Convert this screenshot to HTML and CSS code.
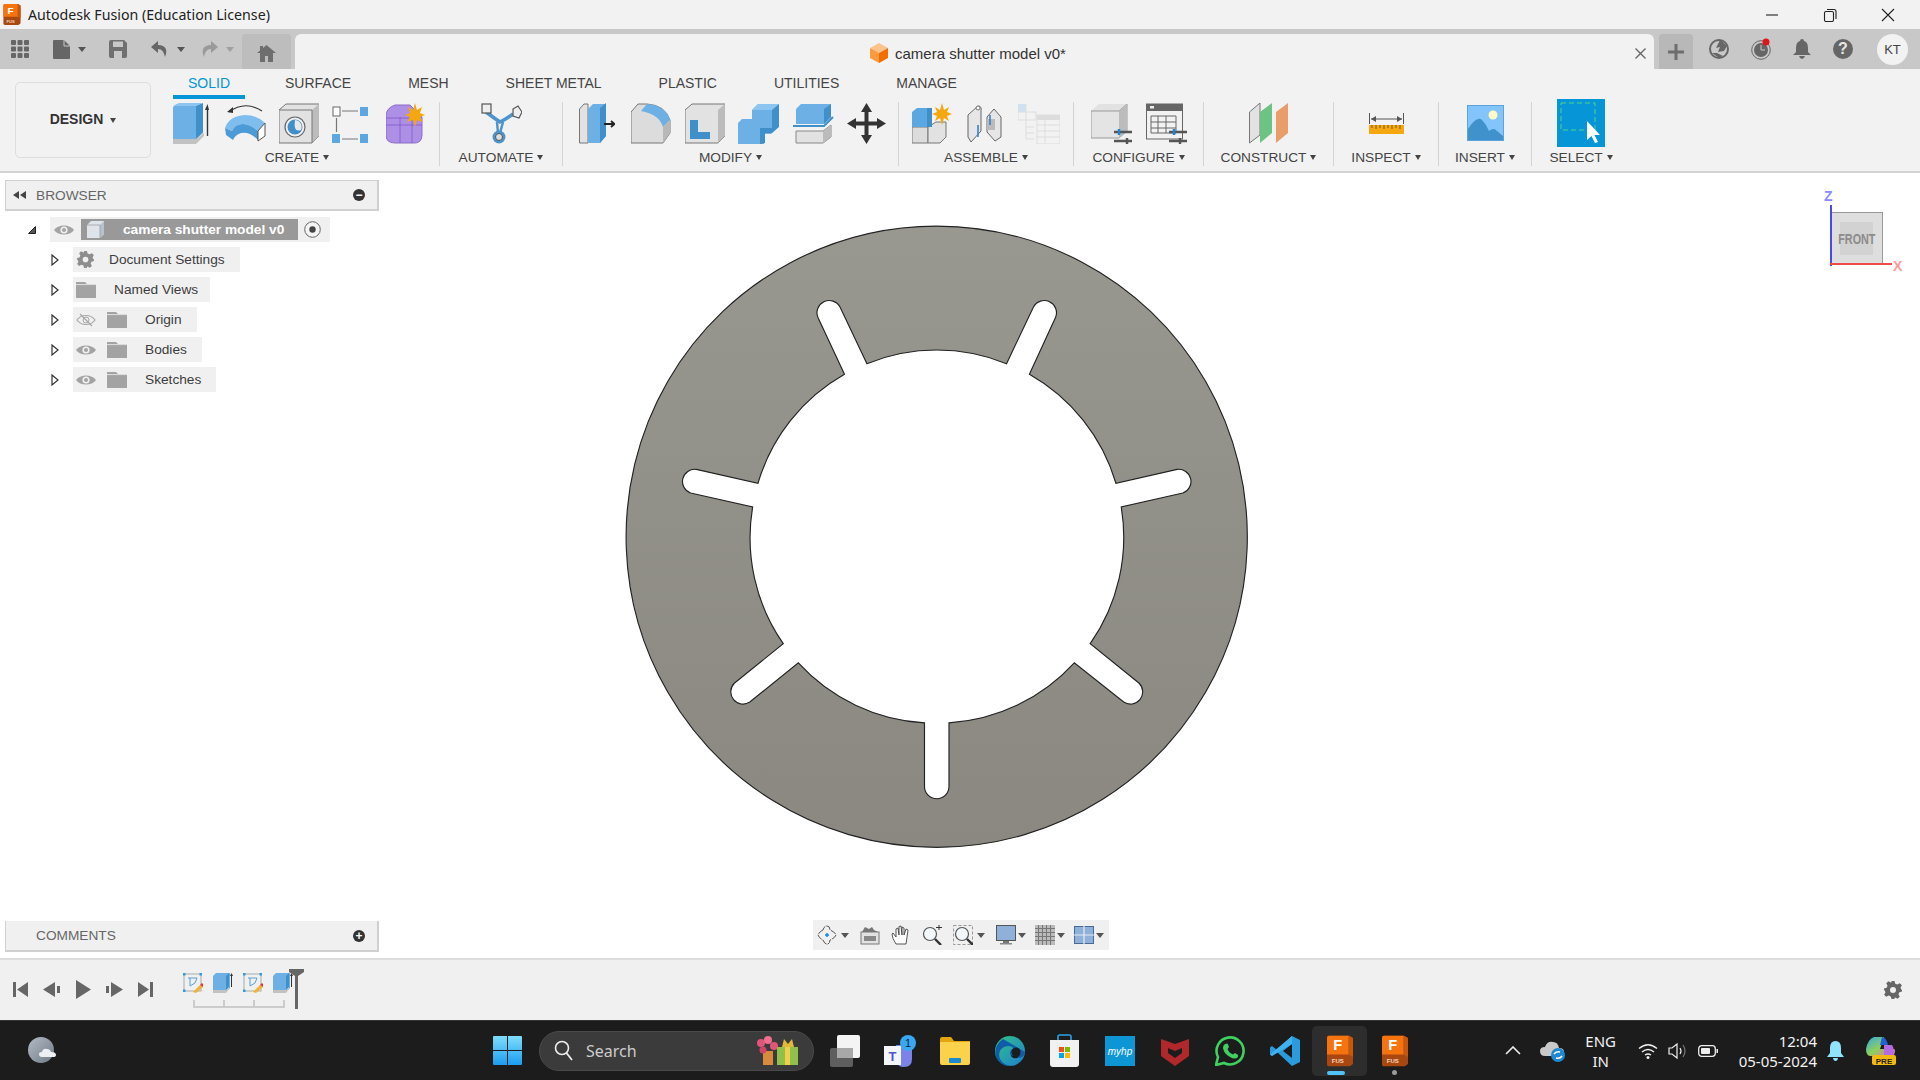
FILE: index.html
```html
<!DOCTYPE html>
<html lang="en">
<head>
  <meta charset="UTF-8">
  <title>Autodesk Fusion (Education License)</title>
  <link rel="stylesheet" href="styles.css">
</head>
<body>
  <!-- shared icons -->
  <svg class="defs" width="0" height="0">
    <symbol id="eye" viewBox="0 0 20 12">
      <path d="M0 6C4 0 16 0 20 6C16 12 4 12 0 6Z" fill="#a3a3a3"/>
      <circle cx="10" cy="6" r="3.6" fill="#f0f0f0"/>
      <circle cx="10" cy="6" r="2" fill="#a3a3a3"/>
    </symbol>
    <symbol id="eye-off" viewBox="0 0 20 14">
      <path d="M1 7C5 1 15 1 19 7C15 13 5 13 1 7Z" fill="none" stroke="#a8a8a8" stroke-width="1.2"/>
      <circle cx="10" cy="7" r="3" fill="none" stroke="#a8a8a8"/>
      <path d="M4 1L16 13" stroke="#a8a8a8" stroke-width="1.2"/>
    </symbol>
    <symbol id="folder" viewBox="0 0 20 16">
      <path d="M0 0H9L11 2H20V16H0Z" fill="#a3a3a3"/>
      <path d="M0 2.6H20" stroke="#f0f0f0" stroke-width=".8"/>
    </symbol>
    <symbol id="arrow" viewBox="0 0 8 12">
      <path d="M1 1L7 6L1 11Z" fill="#fff" stroke="#333" stroke-width="1.2"/>
    </symbol>
    <symbol id="tl-sketch" viewBox="0 0 20 20">
      <rect x="1" y="1" width="17" height="17" fill="none" stroke="#aaa"/>
      <rect x="0" y="0" width="2.5" height="2.5" fill="#2f9ae0"/>
      <rect x="16.5" y="0" width="2.5" height="2.5" fill="#2f9ae0"/>
      <rect x="0" y="16.5" width="2.5" height="2.5" fill="#2f9ae0"/>
      <path d="M5 5H14L12 10L7 13V5" fill="none" stroke="#5a9fd4"/>
      <path d="M10 19L17 12L20 14L13 20Z" fill="#f2b233"/>
      <path d="M17 12L19 10L21 12L20 14Z" fill="#e33"/>
    </symbol>
    <symbol id="tl-extrude" viewBox="0 0 20 20">
      <path d="M0 3L3 0H17V15L15 17H0Z" fill="#6cb0e6"/>
      <path d="M13 3L16 0V14L13 17Z" fill="#3f8fcb"/>
      <path d="M0 17H13L16 14V16L13 20H0Z" fill="#c2c2c2"/>
      <path d="M18.500 2V14" stroke="#333"/>
      <path d="M17 3L18.500 0L20 3Z" fill="#333"/>
    </symbol>
    <symbol id="fusion" viewBox="0 0 30 36">
      <path d="M3 0H25L30 3V33L26 36H3Q0 36 0 33V3Q0 0 3 0Z" fill="#a8470f"/>
      <path d="M3 0H25V22H0V3Q0 0 3 0Z" fill="#f57410"/>
      <path d="M25 0L30 3V25L25 22Z" fill="#c9560b"/>
    </symbol>
  </svg>

  <header class="titlebar">
    <svg class="app-logo" width="18" height="21" viewBox="0 0 30 36">
      <use href="#fusion"/>
      <text x="12.500" y="17" class="logo-f">F</text>
      <text x="12.500" y="32" class="logo-fus">FUS</text>
    </svg>
    <span class="app-title">Autodesk Fusion (Education License)</span>
    <div class="window-controls">
      <svg width="14" height="14" viewBox="0 0 14 14"><path d="M1 7H13" stroke="#222" stroke-width="1.100"/></svg>
      <svg width="14" height="14" viewBox="0 0 14 14"><rect x="1.500" y="3.500" width="9" height="10" rx="1.500" fill="none" stroke="#222" stroke-width="1.100"/><path d="M4 1.500H11Q13 1.500 13 3.500V11" fill="none" stroke="#222" stroke-width="1.100"/></svg>
      <svg width="14" height="14" viewBox="0 0 14 14"><path d="M1 1L13 13M13 1L1 13" stroke="#222" stroke-width="1.100"/></svg>
    </div>
  </header>

  <div class="toolbar">
    <div class="quick-tools">
      <svg class="qt-grid" width="18" height="18" viewBox="0 0 18 18" fill="#666"><rect width="5" height="5" rx="1"/><rect x="6.500" width="5" height="5" rx="1"/><rect x="13" width="5" height="5" rx="1"/><rect y="6.500" width="5" height="5" rx="1"/><rect x="6.500" y="6.500" width="5" height="5" rx="1"/><rect x="13" y="6.500" width="5" height="5" rx="1"/><rect y="13" width="5" height="5" rx="1"/><rect x="6.500" y="13" width="5" height="5" rx="1"/><rect x="13" y="13" width="5" height="5" rx="1"/></svg>
      <svg class="qt-file" width="17" height="19" viewBox="0 0 17 19"><path d="M1 0H11L17 6V18Q17 19 16 19H1Q0 19 0 18V1Q0 0 1 0Z" fill="#666"/><path d="M11 0V6H17" fill="none" stroke="#c8c8c8"/></svg>
      <span class="caret qt-caret"></span>
      <svg class="qt-save" width="18" height="18" viewBox="0 0 18 18"><path d="M2 0H15L18 3V16Q18 18 16 18H2Q0 18 0 16V2Q0 0 2 0Z" fill="#707070"/><rect x="4" y="1.500" width="10" height="5.500" fill="#c8c8c8"/><rect x="5" y="11" width="8" height="7" fill="#c8c8c8"/></svg>
      <svg class="qt-undo" width="18" height="18" viewBox="0 0 18 18"><path d="M7 1L0 7L7 13V9C11 9 13 12 14 17C17 10 15 5 7 5Z" fill="#666"/></svg>
      <span class="caret qt-caret"></span>
      <svg class="qt-redo" width="18" height="18" viewBox="0 0 18 18"><path d="M11 1L18 7L11 13V9C7 9 5 12 4 17C1 10 3 5 11 5Z" fill="#9a9a9a"/></svg>
      <span class="caret qt-caret muted"></span>
    </div>
    <div class="home-tab">
      <svg width="19" height="17" viewBox="0 0 19 17"><path d="M9.500 0L19 8H16V17H11V11H8V17H3V8H0L3 5.500V1H6V3Z" fill="#6e6e6e"/></svg>
    </div>
    <div class="doc-tab">
      <svg class="doc-cube" width="18" height="20" viewBox="0 0 18 20"><path d="M9 0L18 5L9 10L0 5Z" fill="#fdc38d"/><path d="M0 5L9 10V20L0 15Z" fill="#fb9a3e"/><path d="M18 5L9 10V20L18 15Z" fill="#f36d00"/></svg>
      <span class="doc-name">camera shutter model v0*</span>
      <svg class="doc-close" width="11" height="11" viewBox="0 0 11 11"><path d="M0.500 0.500L10.500 10.500M10.500 0.500L0.500 10.500" stroke="#666" stroke-width="1.400"/></svg>
    </div>
    <div class="new-tab">
      <svg width="16" height="16" viewBox="0 0 16 16"><path d="M8 0V16M0 8H16" stroke="#6e6e6e" stroke-width="3"/></svg>
    </div>
    <div class="account-tools">
      <svg width="20" height="20" viewBox="0 0 20 20"><circle cx="10" cy="10" r="9" fill="none" stroke="#666" stroke-width="2"/><path d="M11 1L7 9L11 8L9 13L15 12L18 7L13 2ZM3 14L10 19L14 17L8 14Z" fill="#666"/></svg>
      <svg width="20" height="22" viewBox="0 0 20 22"><circle cx="10" cy="12" r="9.300" fill="none" stroke="#666"/><circle cx="10" cy="12" r="7" fill="#666"/><path d="M10 7V12H14" stroke="#c8c8c8" fill="none"/><circle cx="15" cy="4" r="3.500" fill="#e0141c"/></svg>
      <svg width="18" height="20" viewBox="0 0 18 20"><path d="M9 0Q11 0 11 2Q15 3 15 9V13L18 16H0L3 13V9Q3 3 7 2Q7 0 9 0Z" fill="#666"/><path d="M6 17H12Q11 20 9 20Q7 20 6 17Z" fill="#666"/></svg>
      <span class="help-icon">?</span>
      <span class="avatar">KT</span>
    </div>
  </div>

  <section class="ribbon">
    <button class="design-btn">DESIGN<span class="caret small"></span></button>
    <div class="ribbon-main">
      <nav class="tabs">
        <span class="tab active">SOLID</span>
        <span class="tab">SURFACE</span>
        <span class="tab">MESH</span>
        <span class="tab">SHEET METAL</span>
        <span class="tab">PLASTIC</span>
        <span class="tab">UTILITIES</span>
        <span class="tab">MANAGE</span>
      </nav>
      <div class="panels">
        <div class="panel p-create">
          <div class="panel-icons icons-create">
            <svg width="36" height="41" viewBox="0 0 36 41"><path d="M0 4L4 1H30V30L23 36L0 36Z" fill="#6cb0e6"/><path d="M23 3L30 0V29L23 36Z" fill="#3f8fcb"/><path d="M0 3L6 0H30L23 3Z" fill="#8cc6f0"/><path d="M0 36H23L31 30V33L23 41H0Z" fill="#c2c2c2"/><path d="M34.500 6V33" stroke="#333" stroke-width="1.400"/><path d="M32 7L34.500 1L36 7Z" fill="#333"/></svg>
            <svg width="41" height="41" viewBox="0 0 41 41"><path d="M4 9Q20 -3 37 8" fill="none" stroke="#333" stroke-width="1.100"/><path d="M2 9L8 4V10Z" fill="#333"/><path d="M0 25Q4 13 20 12Q32 12 40 20L33 28Q25 21 17 21Q9 22 7 28Z" fill="#7fbdee"/><path d="M0 25L7 28Q9 22 17 21Q25 21 33 28V37Q24 28 16 30Q10 32 8 37L1 32Z" fill="#4d9bd6"/><path d="M33 28L40 20V33L33 38Z" fill="#fff" stroke="#555"/></svg>
            <svg width="40" height="41" viewBox="0 0 40 41"><path d="M0 7L7 1H40V33L33 40H0Z" fill="#e2e2e2" stroke="#777"/><path d="M33 7L40 1V33L33 40Z" fill="#bcbcbc"/><path d="M0.500 7H33V40" fill="none" stroke="#777"/><circle cx="16" cy="24" r="10" fill="#f0f0f0" stroke="#666" stroke-width="1.200"/><circle cx="16" cy="24" r="7.500" fill="#3f8fcb"/><path d="M16 17A7 7 0 0 1 22 27Q14 30 16 17Z" fill="#e8e8e8"/></svg>
            <svg width="36" height="41" viewBox="0 0 36 41"><rect x="1" y="4" width="7" height="9" fill="#fff" stroke="#666"/><rect x="28" y="4" width="8" height="9" fill="#5aa7e2"/><rect x="0" y="31" width="8" height="9" fill="#5aa7e2"/><rect x="28" y="31" width="8" height="9" fill="#5aa7e2"/><path d="M10 8H26M10 36H26M4.500 15V29" stroke="#777" stroke-width="1.200"/></svg>
            <svg width="39" height="41" viewBox="0 0 39 41"><path d="M0 13Q0 5 9 2H24L36 14V32Q36 41 26 40H9Q0 40 0 32Z" fill="#ae8fe6" stroke="#8c6cc6"/><path d="M0 22H36M14 14V40M26 14V40M0 15H34" stroke="#8258c8" stroke-width=".8" fill="none"/><path d="M29 0L31 7L36 4L34 10L39 12L34 14L37 19L31 17L29 24L27 17L21 19L24 14L19 12L24 10L22 4L27 7Z" fill="#f5a70f"/></svg>
          </div>
          <span class="panel-label">CREATE<span class="caret small"></span></span>
        </div>
        <div class="panel p-automate">
          <div class="panel-icons">
            <svg width="42" height="41" viewBox="0 0 42 41"><path d="M6 9Q14 15 20 19Q26 16 33 11" fill="none" stroke="#4d94cc" stroke-width="3.500"/><path d="M17 19L18 30M23 19L20 30" stroke="#4d94cc" stroke-width="2.500"/><rect x="2" y="1" width="9" height="9" fill="#eee" stroke="#555" stroke-width="1.200"/><path d="M33 6L38 3L42 9L39 15L33 13Z" fill="#eee" stroke="#555" stroke-width="1.200"/><circle cx="19" cy="34" r="6.500" fill="#4d94cc"/><circle cx="19" cy="34" r="3.500" fill="#ddd" stroke="#555"/></svg>
          </div>
          <span class="panel-label">AUTOMATE<span class="caret small"></span></span>
        </div>
        <div class="panel p-modify">
          <div class="panel-icons icons-modify">
            <svg width="36" height="41" viewBox="0 0 36 41"><path d="M0.500 6L5 1H9V40H0.500Z" fill="#e2e2e2" stroke="#777"/><path d="M9 6L14 1H27V33L21 40H9Z" fill="#6cb0e6"/><path d="M21 5L27 0V33L21 40Z" fill="#3f8fcb"/><path d="M25 21H35M32 18L35.500 21L32 24" stroke="#222" stroke-width="1.800" fill="none"/></svg>
            <svg width="40" height="41" viewBox="0 0 40 41"><path d="M0 9L7 1H16Q34 2 39 17V30L32 40H0Z" fill="#dcdcdc" stroke="#777"/><path d="M16 1Q34 2 39 17L32 24Q28 11 10 8Z" fill="#6cb0e6"/><path d="M32 24L39 17V30L32 40Z" fill="#b8b8b8"/></svg>
            <svg width="40" height="41" viewBox="0 0 40 41"><path d="M0 7L7 1H40V33L33 40H0Z" fill="#e2e2e2" stroke="#777"/><path d="M33 7L40 1V33L33 40Z" fill="#bcbcbc"/><rect x="5" y="17" width="20" height="19" fill="#7dbdf0"/><path d="M5 17H13V29L25 29V36H5Z" fill="#3f8fcb"/><path d="M13 17H25V29H13Z" fill="#e2e2e2"/></svg>
            <svg width="41" height="41" viewBox="0 0 41 41"><path d="M0 20L4 16H14V7L20 1H41V23L33 31H26V41H0Z" fill="#6cb0e6"/><path d="M34 6L41 1V24L34 30H27V40L22 41V25H34Z" fill="#3f8fcb"/><path d="M14 7H34L41 1H20Z" fill="#8cc6f0"/></svg>
            <svg width="41" height="41" viewBox="0 0 41 41"><path d="M3 6L8 1H38V14L31 21H3Z" fill="#6cb0e6"/><path d="M31 6L38 1V14L31 21Z" fill="#3f8fcb"/><path d="M0 23H31L40 14" fill="none" stroke="#3f8fcb" stroke-width="2"/><path d="M3 28H30L38 22V34L30 40H3Z" fill="#e2e2e2" stroke="#888"/><path d="M30 28L38 22V34L30 40Z" fill="#bcbcbc"/></svg>
            <svg width="39" height="41" viewBox="0 0 39 41"><path d="M19.500 0L25 9H21.500V18.500H30V15L39 20.500L30 26V22.500H21.500V32H25L19.500 41L14 32H17.500V22.500H9V26L0 20.500L9 15V18.500H17.500V9H14Z" fill="#333"/></svg>
          </div>
          <span class="panel-label">MODIFY<span class="caret small"></span></span>
        </div>
        <div class="panel p-assemble">
          <div class="panel-icons">
            <svg width="40" height="41" viewBox="0 0 40 41"><path d="M0 24H16V40H0Z" fill="#dcdcdc" stroke="#777"/><path d="M16 24L24 19H34V34L28 40H16Z" fill="#e2e2e2" stroke="#777"/><path d="M0 9L5 5H20V24H0Z" fill="#5aa7e2"/><path d="M15 5H20V24L15 24Z" fill="#3f8fcb"/><path d="M30 0L32 7L37 4L35 9L40 11L35 13L37 18L32 15L30 22L28 15L23 18L25 13L20 11L25 9L23 4L28 7Z" fill="#f5a70f"/></svg>
            <svg width="36" height="41" viewBox="0 0 36 41"><path d="M1 12L11 3Q15 3 14 8V28L4 39L1 34Z" fill="#e6e6e6" stroke="#666"/><path d="M20 14V29L28 38L34 34V14L27 6Z" fill="#e6e6e6" stroke="#666"/><path d="M20 16H28V27H20Z" fill="#bbb"/><path d="M11 22V34M23 12V22" stroke="#2f86d0" stroke-width="1.600"/><circle cx="11" cy="5" r="2" fill="#fff" stroke="#777"/></svg>
            <svg width="42" height="41" viewBox="0 0 42 41"><rect x="0" y="1" width="8" height="8" fill="#cfe2f2"/><rect x="0" y="9" width="18" height="8" fill="none" stroke="#ddd"/><path d="M8 1V17M8 17V36H16M8 24H16M8 30H16" stroke="#ddd" fill="none"/><rect x="19" y="12" width="23" height="29" fill="#f2f2f2" stroke="#ddd"/><rect x="19" y="12" width="23" height="5" fill="#ddd"/><path d="M19 22H42M19 28H42M19 34H42M27 17V41" stroke="#ddd"/></svg>
          </div>
          <span class="panel-label">ASSEMBLE<span class="caret small"></span></span>
        </div>
        <div class="panel p-configure">
          <div class="panel-icons icons-config">
            <svg width="41" height="41" viewBox="0 0 41 41"><path d="M0 8L8 1H36V27H0Z" fill="#e2e2e2"/><path d="M28 8L36 1V28L28 35H0V8H28Z" fill="#e4e4e4" stroke="#999"/><path d="M28 8L36 1V28L28 35Z" fill="#bcbcbc"/><path d="M23 29H41M23 38H41" stroke="#555" stroke-width="2.500"/><path d="M28 26V32" stroke="#1a86d8" stroke-width="2.500"/><path d="M36 35V41" stroke="#555" stroke-width="2.500"/></svg>
            <svg width="41" height="41" viewBox="0 0 41 41"><rect x="0.500" y="1" width="36" height="35" fill="#f2f2f2" stroke="#666"/><rect x="0" y="1" width="37" height="7" fill="#666"/><rect x="4" y="3" width="4" height="2.500" fill="#eee"/><path d="M5 13H30V30H5ZM5 19H30M5 25H30M12 13V30M20 13V30" fill="none" stroke="#666"/><path d="M23 29H41M23 38H41" stroke="#555" stroke-width="2.500"/><path d="M28 26V32" stroke="#1a86d8" stroke-width="2.500"/><path d="M34 35V41" stroke="#555" stroke-width="2.500"/></svg>
          </div>
          <span class="panel-label">CONFIGURE<span class="caret small"></span></span>
        </div>
        <div class="panel p-construct">
          <div class="panel-icons">
            <svg width="39" height="41" viewBox="0 0 39 41"><path d="M0.500 9L11 0V32L0.500 40Z" fill="#e2e2e2" stroke="#777"/><path d="M11 9L23 0V30L11 40Z" fill="#6cc383"/><path d="M27 9L39 0V30L27 40Z" fill="#e99d69"/></svg>
          </div>
          <span class="panel-label">CONSTRUCT<span class="caret small"></span></span>
        </div>
        <div class="panel p-inspect">
          <div class="panel-icons">
            <svg width="35" height="21" viewBox="0 0 35 21"><path d="M0.500 0V11M34.500 0V11M2 6H33" stroke="#555"/><path d="M2 6L7 3V9ZM33 6L28 3V9Z" fill="#555"/><rect x="0" y="12" width="35" height="9" fill="#f5a70f"/><path d="M3 12V15M7 12V16M11 12V15M15 12V16M19 12V15M23 12V16M27 12V15M31 12V16" stroke="#7a5a10"/></svg>
          </div>
          <span class="panel-label">INSPECT<span class="caret small"></span></span>
        </div>
        <div class="panel p-insert">
          <div class="panel-icons">
            <svg width="37" height="36" viewBox="0 0 37 36"><rect width="37" height="36" fill="#82c4fb"/><circle cx="26" cy="10" r="4.500" fill="#fffbc4"/><path d="M1 24Q10 10 15 15Q19 19 22 26Q27 22 30 26L36 31V35H1Z" fill="#4092cd"/><rect x="0.500" y="0.500" width="36" height="35" fill="none" stroke="#5aa3dc"/></svg>
          </div>
          <span class="panel-label">INSERT<span class="caret small"></span></span>
        </div>
        <div class="panel p-select">
          <div class="panel-icons">
            <svg width="48" height="48" viewBox="0 0 48 48"><rect width="48" height="48" fill="#0696d7"/><rect x="4" y="4" width="34" height="27" fill="none" stroke="#53d28c" stroke-dasharray="5 3"/><path d="M30 22V41L34.500 37L38 44L41 43L37.500 36H43Z" fill="#fff"/></svg>
          </div>
          <span class="panel-label">SELECT<span class="caret small"></span></span>
        </div>
      </div>
    </div>
  </section>

  <main class="workspace">
    <svg class="part" width="640" height="640" viewBox="0 0 1568 1568">
      <defs>
        <linearGradient id="partFill" x1="0" y1="0" x2="0" y2="1">
          <stop offset="0" stop-color="#989790"/>
          <stop offset="1" stop-color="#8a8880"/>
        </linearGradient>
      </defs>
      <path fill="url(#partFill)" fill-rule="evenodd" stroke="#222" stroke-width="2.800"
        d="M776 15A761 761 0 1 1 775.900 15Z
           M605 352A454 454 0 0 1 947 352L1013 213A30 30 0 0 1 1067 239L1003 378
           A454 454 0 0 1 1215 645L1365 611A30 30 0 0 1 1379 669L1228 703
           A454 454 0 0 1 1152 1038L1272 1135A30 30 0 0 1 1234 1181L1113 1085
           A454 454 0 0 1 806 1232V1388A30 30 0 0 1 746 1388V1232
           A454 454 0 0 1 437 1085L318 1181A30 30 0 0 1 280 1135L400 1038
           A454 454 0 0 1 325 703L173 669A30 30 0 0 1 187 611L338 645
           A454 454 0 0 1 550 378L485 239A30 30 0 0 1 539 213Z"/>
    </svg>

    <div class="view-cube">
      <span class="axis-z">Z</span>
      <div class="cube-face"><span class="cube-inner"><span class="cube-label">FRONT</span></span></div>
      <span class="axis-x">X</span>
    </div>

    <aside class="sidebar">
      <div class="side-top">
        <div class="side-panel">
          <svg class="collapse" width="13" height="8" viewBox="0 0 13 8" fill="#444"><path d="M6 0V8L0 4ZM13 0V8L7 4Z"/></svg>
          <span class="side-title">BROWSER</span>
          <span class="round-btn">&#8722;</span>
        </div>
        <ul class="tree">
          <li class="tree-row">
            <svg class="tree-arrow" width="8" height="8" viewBox="0 0 8 8"><path d="M0.500 7.500L7.500 0.500V7.500Z" fill="#555" stroke="#222"/></svg>
            <div class="root-pill">
              <svg class="eye-root" width="20" height="12"><use href="#eye"/></svg>
              <div class="root-selected">
                <svg class="root-cube" width="17" height="17" viewBox="0 0 17 17"><path d="M0 4L4 0H17V13L13 17H0Z" fill="#dfe4ea"/><path d="M13 4L17 0V13L13 17Z" fill="#b9c2cc"/><path d="M0 4H13V17" fill="none" stroke="#888" stroke-width=".6"/></svg>
                <span class="root-name">camera shutter model v0</span>
              </div>
              <svg class="radio" width="17" height="17" viewBox="0 0 17 17"><circle cx="8.500" cy="8.500" r="7.800" fill="#f4f4f4" stroke="#666"/><circle cx="8.500" cy="8.500" r="3.200" fill="#444"/></svg>
            </div>
          </li>
          <li class="tree-row child">
            <svg class="tree-arrow" width="8" height="12"><use href="#arrow"/></svg>
            <div class="tree-pill pill-doc">
              <svg class="gear" width="17" height="17" viewBox="0 0 24 24"><path fill="#8e8e8e" d="M10 0H14L15 3.500L17.800 4.700L21 3L23.800 5.800L22 9L23.300 11.800L24 12V14L20.500 15L19.300 17.800L21 21L18.200 23.800L15 22L14 22.500V24H10L9 20.500L6.200 19.300L3 21L.2 18.200L2 15L.7 12.200L0 12V10L3.500 9L4.700 6.200L3 3L5.800 .2L9 2L10 1.500ZM12 8A4 4 0 1 0 12 16A4 4 0 1 0 12 8Z"/></svg>
              <span>Document Settings</span>
            </div>
          </li>
          <li class="tree-row child">
            <svg class="tree-arrow" width="8" height="12"><use href="#arrow"/></svg>
            <div class="tree-pill pill-views">
              <svg class="folder-only" width="20" height="16"><use href="#folder"/></svg>
              <span>Named Views</span>
            </div>
          </li>
          <li class="tree-row child">
            <svg class="tree-arrow" width="8" height="12"><use href="#arrow"/></svg>
            <div class="tree-pill pill-item">
              <svg width="20" height="14"><use href="#eye-off"/></svg>
              <svg class="folder-next" width="20" height="16"><use href="#folder"/></svg>
              <span class="item-name">Origin</span>
            </div>
          </li>
          <li class="tree-row child">
            <svg class="tree-arrow" width="8" height="12"><use href="#arrow"/></svg>
            <div class="tree-pill pill-item">
              <svg width="20" height="12"><use href="#eye"/></svg>
              <svg class="folder-next" width="20" height="16"><use href="#folder"/></svg>
              <span class="item-name">Bodies</span>
            </div>
          </li>
          <li class="tree-row child">
            <svg class="tree-arrow" width="8" height="12"><use href="#arrow"/></svg>
            <div class="tree-pill pill-item">
              <svg width="20" height="12"><use href="#eye"/></svg>
              <svg class="folder-next" width="20" height="16"><use href="#folder"/></svg>
              <span class="item-name">Sketches</span>
            </div>
          </li>
        </ul>
      </div>
      <div class="side-panel comments">
        <span class="side-title">COMMENTS</span>
        <span class="round-btn">+</span>
      </div>
    </aside>

    <div class="nav-bar">
      <div class="nav-group">
        <svg width="20" height="20" viewBox="0 0 20 20"><path d="M6 5Q2 7 1 10Q2 13 6 15Q8 20 11 19Q13 18 13 15Q18 13 19 10Q18 7 13 5Q13 1 10 1Q7 1 6 5Z" fill="none" stroke="#555" stroke-dasharray="6 1"/><path d="M8 10H12M10 8V12" stroke="#1a86d8" stroke-width="1.500"/></svg>
        <span class="caret"></span>
      </div>
      <svg width="20" height="20" viewBox="0 0 20 20"><rect x="1" y="7" width="18" height="12" fill="#e2e2e2" stroke="#777"/><rect x="4" y="11" width="12" height="5" fill="#888"/><path d="M2 7L5 2L9 4L12 2L14 5L18 7Z" fill="#777"/></svg>
      <svg width="20" height="20" viewBox="0 0 20 20"><path d="M5 19Q1 13 1 9L2 8L5 12V4L7 3L8 10V1.500L10 1L11 10V2L13 3L13 10L15 4L17 5L15 19Z" fill="#fff" stroke="#444" stroke-width=".9"/></svg>
      <svg width="20" height="20" viewBox="0 0 20 20"><circle cx="8" cy="9" r="6.500" fill="#f2f7f9" stroke="#555" stroke-width="1.200"/><path d="M13 14L19 20" stroke="#333" stroke-width="2.400"/><path d="M14 2.500H20M17 0V5" stroke="#333"/></svg>
      <div class="nav-group">
        <svg width="20" height="20" viewBox="0 0 20 20"><rect x="0.500" y="0.500" width="19" height="19" fill="none" stroke="#999" stroke-dasharray="3 2"/><circle cx="9" cy="9" r="6.500" fill="#f2f7f9" stroke="#555" stroke-width="1.200"/><path d="M14 14L20 20" stroke="#333" stroke-width="2.400"/></svg>
        <span class="caret"></span>
      </div>
      <div class="nav-group tight">
        <svg width="20" height="20" viewBox="0 0 20 20"><rect x="0.500" y="0.500" width="19" height="15" fill="#8fb1d9" stroke="#555"/><rect x="7" y="16" width="6" height="2" fill="#777"/><rect x="4" y="18" width="12" height="1.500" fill="#888"/></svg>
        <span class="caret"></span>
      </div>
      <div class="nav-group tight">
        <svg width="20" height="20" viewBox="0 0 20 20"><rect width="20" height="20" fill="#bbb"/><path d="M0 3.500H20M0 7.500H20M0 11.500H20M0 15.500H20M3.500 0V20M7.500 0V20M11.500 0V20M15.500 0V20" stroke="#777"/></svg>
        <span class="caret"></span>
      </div>
      <div class="nav-group tight">
        <svg width="20" height="18" viewBox="0 0 20 18"><rect x="0.500" y="0.500" width="19" height="17" fill="#8fb1d9" stroke="#4a6a96"/><path d="M10 0V18M10 9H20M0 9H10" stroke="#e6edf5" stroke-width="1.200"/></svg>
        <span class="caret"></span>
      </div>
    </div>
  </main>

  <section class="timeline">
    <div class="player">
      <svg width="15" height="15" viewBox="0 0 15 15" fill="#666"><path d="M0 0H3V15H0ZM15 0V15L4 7.500Z"/></svg>
      <svg width="17" height="15" viewBox="0 0 17 15" fill="#666"><path d="M12 0V15L0 7.500ZM14 4H17V11H14Z"/></svg>
      <svg width="15" height="19" viewBox="0 0 15 19" fill="#666"><path d="M0 0L15 9.500L0 19Z"/></svg>
      <svg width="17" height="15" viewBox="0 0 17 15" fill="#666"><path d="M5 0V15L17 7.500ZM0 4H3V11H0Z"/></svg>
      <svg width="15" height="15" viewBox="0 0 15 15" fill="#666"><path d="M0 0L11 7.500L0 15ZM12 0H15V15H12Z"/></svg>
    </div>
    <div class="history">
      <div class="history-icons">
        <svg width="20" height="20"><use href="#tl-sketch"/></svg>
        <svg width="20" height="20"><use href="#tl-extrude"/></svg>
        <svg width="20" height="20"><use href="#tl-sketch"/></svg>
        <svg width="20" height="20"><use href="#tl-extrude"/></svg>
      </div>
      <svg class="history-bracket" width="92" height="8" viewBox="0 0 92 8"><path d="M1 0V7H91V0M31 0V7M61 0V7" fill="none" stroke="#ccc" stroke-width="2"/></svg>
      <svg class="history-marker" width="15" height="40" viewBox="0 0 15 40"><path d="M0 0H15V3L9 7H6L0 3Z" fill="#666"/><rect x="6" y="6" width="3" height="34" fill="#666"/></svg>
    </div>
    <svg class="timeline-gear" width="18" height="18" viewBox="0 0 24 24"><path fill="#666" d="M10 0H14L15 3.500L17.800 4.700L21 3L23.800 5.800L22 9L23.300 11.800L24 12V14L20.500 15L19.300 17.800L21 21L18.200 23.800L15 22L14 22.500V24H10L9 20.500L6.200 19.300L3 21L.2 18.200L2 15L.7 12.200L0 12V10L3.500 9L4.700 6.200L3 3L5.800 .2L9 2L10 1.500ZM12 8A4 4 0 1 0 12 16A4 4 0 1 0 12 8Z"/></svg>
  </section>

  <footer class="taskbar">
    <svg class="weather" width="28" height="27" viewBox="0 0 28 27"><defs><linearGradient id="moon" x1="0" y1="0" x2="1" y2="1"><stop offset="0" stop-color="#b4bcc6"/><stop offset="1" stop-color="#6f7a86"/></linearGradient></defs><circle cx="13" cy="13" r="13" fill="url(#moon)"/><path d="M14 20Q11 20 11 17Q11 15 14 15Q15 11 19 12Q22 12 23 15Q28 15 28 18Q28 20 25 20Z" fill="#eef1f4"/></svg>
    <svg class="start" width="29" height="29" viewBox="0 0 29 29"><defs><linearGradient id="win" x1="0" y1="0" x2="0" y2="1"><stop offset="0" stop-color="#7fdcfb"/><stop offset="1" stop-color="#1c9df0"/></linearGradient></defs><path d="M0 1Q0 0 1 0H14V14H0ZM15 0H28Q29 0 29 1V14H15ZM0 15H14V29H1Q0 29 0 28ZM15 15H29V28Q29 29 28 29H15Z" fill="url(#win)"/></svg>
    <div class="search">
      <svg width="19" height="21" viewBox="0 0 19 21"><circle cx="8" cy="8" r="6.500" fill="none" stroke="#eee" stroke-width="1.600"/><path d="M12.500 13L18 20" stroke="#eee" stroke-width="1.800"/></svg>
      <span class="search-text">Search</span>
      <svg class="search-art" width="44" height="29" viewBox="0 0 44 29"><rect x="8" y="15" width="10" height="14" fill="#d98a3a"/><circle cx="6" cy="7" r="4" fill="#e2557a"/><circle cx="13" cy="4" r="4" fill="#ef6f8e"/><circle cx="19" cy="10" r="4" fill="#e2557a"/><circle cx="8" cy="14" r="3.500" fill="#cf4468"/><rect x="22" y="11" width="21" height="18" fill="#8fc04a"/><rect x="30" y="11" width="5" height="18" fill="#f2cf4a"/><path d="M27 11L29 3L33 8L37 3L39 11Z" fill="#e0b83a"/></svg>
    </div>
    <div class="task-icons">
      <span class="task"><svg width="30" height="32" viewBox="0 0 30 32"><rect x="0" y="13" width="23" height="19" rx="2" fill="#5e5e5e"/><rect x="7" y="0" width="23" height="23" rx="2" fill="#f4f4f4"/><rect x="7" y="13" width="16" height="10" fill="#a8a8a8"/></svg></span>
      <span class="task"><svg width="32" height="32" viewBox="0 0 32 32"><path d="M12 10H26Q28 10 28 12V24Q28 32 20 32Q13 32 13 26Z" fill="#7b83eb"/><rect x="0" y="11" width="17" height="19" fill="#f4f6fb"/><text x="8.500" y="26" class="teams-t">T</text><circle cx="24" cy="8" r="8" fill="#39a7f2"/><text x="24" y="12" class="badge-num">1</text></svg></span>
      <span class="task"><svg width="30" height="28" viewBox="0 0 30 28"><path d="M0 2Q0 0 2 0H11L14 4H30V8H0Z" fill="#e4a60f"/><path d="M0 5H30V26Q30 28 28 28H2Q0 28 0 26Z" fill="#fbd24a"/><rect x="9" y="21" width="12" height="5" rx="1" fill="#1c8ad2"/></svg></span>
      <span class="task"><svg width="30" height="30" viewBox="0 0 30 30"><defs><linearGradient id="edge" x1="0" y1="0" x2="1" y2="1"><stop offset="0" stop-color="#33c481"/><stop offset="1" stop-color="#1a7fd4"/></linearGradient></defs><circle cx="15" cy="15" r="15" fill="url(#edge)"/><path d="M30 16Q30 22 22 22Q15 22 15 17Q15 13 19 13Q16 8 9 11Q2 15 5 23Q9 30 17 30Q6 31 1 21Q-2 10 8 3" fill="#0f5da8"/><path d="M22 22Q17 23 16 19Q20 21 26 18Z" fill="#1c1c1c"/><circle cx="21" cy="16" r="4.500" fill="#1c1c1c"/></svg></span>
      <span class="task"><svg width="29" height="33" viewBox="0 0 29 33"><path d="M8 6V2Q8 1 10 1H19Q21 1 21 2V6" fill="none" stroke="#2ba3ea" stroke-width="1.600"/><path d="M0 6H29V30Q29 33 26 33H3Q0 33 0 30Z" fill="#f1f1f1"/><rect x="9" y="13" width="5" height="5" fill="#f25022"/><rect x="15" y="13" width="5" height="5" fill="#7fba00"/><rect x="9" y="19" width="5" height="5" fill="#00a4ef"/><rect x="15" y="19" width="5" height="5" fill="#ffb900"/></svg></span>
      <span class="task"><svg width="30" height="30" viewBox="0 0 30 30"><rect width="30" height="30" fill="#0d96d6"/><text x="15" y="19" class="myhp">myhp</text></svg></span>
      <span class="task"><svg width="28" height="30" viewBox="0 0 28 30"><path d="M0 3L14 8L28 3V20L14 30L0 20ZM7 12V17L14 22L21 17V12L14 15Z" fill="#b0282c" fill-rule="evenodd"/></svg></span>
      <span class="task"><svg width="30" height="30" viewBox="0 0 30 30"><path d="M1 29L3 21A13.500 13.500 0 1 1 9 27Z" fill="none" stroke="#3ed160" stroke-width="2.600"/><path d="M10 8L12.500 7.500L14 11L12.500 13Q14 17 18 18.500L20 17L23 19V21Q20 24 15 21Q9 18 8 12Q8 9 10 8Z" fill="#3ed160"/></svg></span>
      <span class="task"><svg width="30" height="30" viewBox="0 0 30 30"><path d="M22 0L30 4V26L22 30L7 16L2 20L0 18.500V11.500L2 10L7 14ZM22 8L13 15L22 22Z" fill="#2a9bdc" fill-rule="evenodd"/><path d="M0 18.500L22 0V8L2 20Z" fill="#3fb2ef"/></svg></span>
      <span class="task active"><svg width="26" height="32" viewBox="0 0 30 36"><use href="#fusion"/><text x="12.500" y="17" class="logo-f">F</text><text x="12.500" y="32" class="logo-fus">FUS</text></svg></span>
      <span class="task pinned"><svg width="26" height="32" viewBox="0 0 30 36"><use href="#fusion"/><text x="12.500" y="17" class="logo-f">F</text><text x="12.500" y="32" class="logo-fus">FUS</text></svg></span>
    </div>
    <div class="tray">
      <svg width="16" height="9" viewBox="0 0 16 9"><path d="M1 8L8 1L15 8" fill="none" stroke="#eee" stroke-width="1.600"/></svg>
      <svg class="tray-cloud" width="26" height="22" viewBox="0 0 26 22"><path d="M5 16Q0 16 0 11Q0 7 5 7Q7 1 13 2Q18 2 19 8Q24 8 24 12H12V16Z" fill="#c9c9c9"/><circle cx="18" cy="15" r="7" fill="#1c8ad2"/><path d="M14 14Q16 11 20 12M22 16Q20 19 16 18" stroke="#fff" stroke-width="1.400" fill="none"/></svg>
      <div class="lang"><span>ENG</span><span>IN</span></div>
      <svg class="tray-wifi" width="20" height="16" viewBox="0 0 20 16"><path d="M1 5.500Q10 -2 19 5.500M4 9Q10 4 16 9M7 12Q10 10 13 12" fill="none" stroke="#eee" stroke-width="1.400"/><circle cx="10" cy="14.500" r="1.500" fill="#eee"/></svg>
      <svg class="tray-icon" width="20" height="18" viewBox="0 0 20 18"><path d="M1 6H4L9 2V16L4 12H1Z" fill="none" stroke="#eee" stroke-width="1.200"/><path d="M12 6Q14 9 12 12" fill="none" stroke="#eee" stroke-width="1.200"/><path d="M15 3Q19 9 15 15" fill="none" stroke="#777" stroke-width="1.200"/></svg>
      <svg class="tray-icon" width="20" height="12" viewBox="0 0 20 12"><rect x="0.700" y="0.700" width="16.600" height="10.600" rx="3" fill="none" stroke="#eee" stroke-width="1.300"/><rect x="3" y="3" width="9" height="6" rx="1" fill="#eee"/><rect x="18.500" y="4" width="1.500" height="4" fill="#eee"/></svg>
      <div class="clock"><span>12:04</span><span>05-05-2024</span></div>
      <svg class="tray-bell" width="17" height="20" viewBox="0 0 17 20"><path d="M8.500 0Q14 0 14 7V12L17 16H0L3 12V7Q3 0 8.500 0Z" fill="#8fe4fb"/><path d="M6 17H11Q10.500 20 8.500 20Q6.500 20 6 17Z" fill="#8fe4fb"/></svg>
      <svg class="tray-copilot" width="30" height="28" viewBox="0 0 30 28"><defs><linearGradient id="cop" x1="0" y1="0" x2="1" y2="1"><stop offset="0" stop-color="#2fa8e8"/><stop offset=".5" stop-color="#8dd05a"/><stop offset="1" stop-color="#e86fb8"/></linearGradient></defs><path d="M8 0H18L14 12H28Q30 12 28 18L25 19H6Q0 20 0 12Q2 2 8 0Z" fill="url(#cop)"/><path d="M16 0Q20 0 22 8H14Z" fill="#2360d8"/><path d="M18 8H26Q29 12 27 19H18Z" fill="#b56ae0"/><rect x="6" y="18" width="24" height="10" rx="2" fill="#f2b90f"/><text x="18" y="26.500" class="pre">PRE</text></svg>
    </div>
  </footer>
</body>
</html>
```

FILE: styles.css
```css
* {
  box-sizing: border-box;
}

body, ul {
  margin: 0;
  padding: 0;
}

ul {
  list-style: none;
}

body {
  width: 1920px;
  height: 1080px;
  overflow: hidden;
  display: flex;
  flex-direction: column;
  font-family: "Liberation Sans", Arial, sans-serif;
  font-size: 13.700px;
  color: #444;
  background-color: #fff;
}

svg {
  display: block;
  flex-shrink: 0;
}

.defs {
  position: absolute;
}

.caret {
  display: inline-block;
  border-left: 4px solid transparent;
  border-right: 4px solid transparent;
  border-top: 5px solid #555;
}

.caret.small {
  border-left-width: 3px;
  border-right-width: 3px;
  border-top-width: 5px;
  margin-left: 4px;
  vertical-align: 2px;
  border-top-color: #444;
}

/* Title bar */
.titlebar {
  height: 29px;
  display: flex;
  align-items: center;
  padding-left: 3px;
  background-color: #f2f2f2;
}

.logo-f {
  font: bold 17px "Liberation Sans", sans-serif;
  fill: #fff;
  text-anchor: middle;
}

.logo-fus {
  font: bold 7px "Liberation Sans", sans-serif;
  fill: #f5d9bf;
  text-anchor: middle;
}

.app-title {
  margin-left: 7px;
  font-family: "Noto Sans", sans-serif;
  font-size: 14.200px;
  color: #222;
}

.window-controls {
  margin-left: auto;
  padding-right: 25px;
  display: flex;
  gap: 44px;
}

/* Quick access bar */
.toolbar {
  height: 40px;
  display: flex;
  align-items: flex-end;
  background-color: #c8c8c8;
}

.quick-tools {
  width: 242px;
  height: 40px;
  display: flex;
  align-items: center;
  padding-left: 11px;
}

.qt-file {
  margin-left: 24px;
}

.qt-caret {
  margin-left: 8px;
}

.qt-caret.muted {
  border-top-color: #a0a0a0;
}

.qt-save {
  margin-left: 23px;
}

.qt-undo {
  margin-left: 24px;
}

.qt-redo {
  margin-left: 15px;
}

.home-tab {
  width: 49px;
  height: 35px;
  display: flex;
  align-items: flex-end;
  justify-content: center;
  padding-bottom: 7px;
  background-color: #bdbdbd;
  border-radius: 4px 4px 0 0;
}

.doc-tab {
  width: 1359px;
  height: 35px;
  margin-left: 4px;
  position: relative;
  display: flex;
  align-items: center;
  padding-top: 3px;
  padding-left: 575px;
  background-color: #f2f2f2;
  border-radius: 6px 6px 0 0;
}

.doc-name {
  margin-left: 7px;
  font-size: 15px;
  color: #333;
}

.doc-close {
  margin-left: auto;
  margin-right: 8px;
}

.new-tab {
  width: 34px;
  height: 35px;
  margin-left: 5px;
  display: flex;
  align-items: center;
  justify-content: center;
  background-color: #b8b8b8;
  border-radius: 4px 4px 0 0;
}

.account-tools {
  flex: 1;
  height: 40px;
  display: flex;
  align-items: center;
  padding-left: 16px;
  gap: 22px;
}

.help-icon {
  width: 20px;
  height: 20px;
  border-radius: 50%;
  background-color: #666;
  color: #e6e6e6;
  font-weight: bold;
  font-size: 16px;
  line-height: 20px;
  text-align: center;
}

.avatar {
  width: 31px;
  height: 31px;
  margin-left: 2px;
  border-radius: 50%;
  background-color: #f2f2f2;
  color: #444;
  font-size: 13px;
  line-height: 31px;
  text-align: center;
}

/* Ribbon */
.ribbon {
  height: 104px;
  display: flex;
  padding-left: 15px;
  background-color: #f2f2f2;
  border-bottom: 2px solid #d4d4d4;
}

.design-btn {
  width: 136px;
  height: 76px;
  margin-top: 13px;
  padding-bottom: 4px;
  font-family: inherit;
  font-size: 14px;
  font-weight: bold;
  color: #333;
  background-color: #f2f2f2;
  border: 1px solid #ddd;
  border-radius: 5px;
}

.design-btn .caret.small {
  margin-left: 7px;
  vertical-align: 1px;
}

.ribbon-main {
  margin-left: 4px;
}

.tabs {
  height: 30px;
  display: flex;
  gap: 27px;
  padding-left: 18px;
}

.tab {
  height: 30px;
  padding: 6px 15px 0;
  line-height: 16px;
  font-size: 14px;
  color: #444;
}

.tab.active {
  margin-right: -2px;
  color: #0696d7;
  border-bottom: 4px solid #0696d7;
}

.panels {
  display: flex;
  margin-top: 3px;
}

.panel {
  height: 64px;
  display: flex;
  flex-direction: column;
  align-items: center;
  border-right: 1px solid #d4d4d4;
}

.panel-icons {
  flex: none;
  height: 42px;
  display: flex;
  align-items: center;
  gap: 15px;
}

.icons-create {
  gap: 13px;
  padding-left: 3px;
}

.icons-create svg:first-child {
  margin-right: 3px;
}

.icons-create svg:nth-child(4) {
  margin-right: 5px;
}

.icons-modify {
  gap: 13.500px;
  padding-left: 4px;
}

.icons-modify svg:first-child {
  margin-right: 3px;
}

.icons-config {
  gap: 14px;
}

.panel-label {
  flex: none;
  margin-top: 5px;
  line-height: 18px;
  white-space: nowrap;
}

.p-create { width: 285px; }
.p-automate { width: 123px; }
.p-modify { width: 336px; }
.p-assemble { width: 175px; }
.p-configure { width: 130px; }
.p-construct { width: 130px; }
.p-inspect { width: 105px; }
.p-insert { width: 93px; }
.p-select { width: 98px; border-right: none; }

/* Canvas */
.workspace {
  flex: 1;
  position: relative;
  background-color: #fff;
}

.part {
  position: absolute;
  left: 620px;
  top: 47px;
}

.view-cube {
  position: absolute;
  left: 1822px;
  top: 15px;
  width: 84px;
  height: 90px;
}

.axis-z {
  position: absolute;
  left: 2px;
  top: 0;
  font-weight: bold;
  font-size: 14px;
  color: #8a8aff;
}

.axis-x {
  position: absolute;
  left: 71px;
  top: 70px;
  font-size: 14px;
  font-weight: bold;
  color: #ff9a9a;
}

.cube-face {
  position: absolute;
  left: 8px;
  top: 24px;
  width: 53px;
  height: 53px;
  display: flex;
  align-items: center;
  justify-content: center;
  background-color: #dedede;
  border: 1px solid #999;
  border-left-color: #4a4ae6;
  border-bottom: 2px solid #ef4b4b;
}

/* axis lines run past the cube corner */
.cube-face::before {
  content: "";
  position: absolute;
  left: -1px;
  top: -8px;
  width: 2px;
  height: 61px;
  background-color: #4a4ae6;
}

.cube-face::after {
  content: "";
  position: absolute;
  left: -1px;
  bottom: -2px;
  width: 62px;
  height: 2px;
  background-color: #ef4b4b;
}

.cube-inner {
  width: 33px;
  height: 33px;
  display: flex;
  align-items: center;
  justify-content: center;
  background-color: #d2d2d2;
}

.cube-label {
  font-size: 15px;
  font-weight: bold;
  color: #8b8b8b;
  transform: scaleX(.72);
}

/* Browser */
.sidebar {
  position: relative;
  width: 374px;
  height: 100%;
  margin-left: 5px;
  padding: 7px 0 6px;
  display: flex;
  flex-direction: column;
  justify-content: space-between;
}

.side-panel {
  height: 31px;
  display: flex;
  align-items: center;
  padding: 0 12px 0 7px;
  background-color: #f0f0f0;
  border: 1px solid #d0d0d0;
  border-width: 1px 2px 2px 1px;
}

.side-panel.comments {
  padding-left: 30px;
  border-top: none;
}

.side-title {
  margin-left: 10px;
  font-size: 13.700px;
  color: #666;
}

.comments .side-title {
  margin-left: 0;
}

.round-btn {
  margin-left: auto;
  width: 12px;
  height: 12px;
  border-radius: 50%;
  background-color: #333;
  color: #fff;
  font-size: 12px;
  font-weight: bold;
  line-height: 12px;
  text-align: center;
}

.tree {
  padding-top: 6px;
  display: flex;
  flex-direction: column;
  gap: 5px;
}

.tree-row {
  height: 25px;
  display: flex;
  align-items: center;
  padding-left: 23px;
}

.tree-row.child {
  padding-left: 46px;
}

.tree-arrow {
  margin-right: 14px;
}

.root-pill {
  width: 280px;
  height: 25px;
  display: flex;
  align-items: center;
  background-color: #f0f0f0;
}

.eye-root {
  margin-left: 4px;
}

.root-selected {
  width: 217px;
  height: 21px;
  margin-left: 7px;
  display: flex;
  align-items: center;
  background-color: #999;
  color: #fff;
  font-weight: bold;
}

.root-cube {
  margin-left: 6px;
}

.root-name {
  margin-left: 19px;
}

.radio {
  margin-left: 6px;
}

.tree-pill {
  height: 25px;
  display: flex;
  align-items: center;
  background-color: #f0f0f0;
  color: #3d3d3d;
}

.pill-doc {
  padding: 0 15px 0 4px;
}

.pill-doc span {
  margin-left: 15px;
}

.pill-views {
  padding: 0 12px 0 3px;
}

.pill-views span {
  margin-left: 18px;
}

.pill-item {
  padding: 0 15px 0 3px;
}

.folder-next {
  margin-left: 11px;
}

.item-name {
  margin-left: 18px;
}

/* View tools */
.nav-bar {
  position: absolute;
  left: 813px;
  top: 747px;
  width: 296px;
  height: 30px;
  display: flex;
  align-items: center;
  padding-left: 4px;
  gap: 11px;
  background-color: #f0f0f0;
}

.nav-group {
  display: flex;
  align-items: center;
  gap: 4px;
}

.nav-group.tight {
  gap: 2px;
  margin-right: -2px;
}

/* Timeline */
.timeline {
  height: 62px;
  display: flex;
  align-items: center;
  padding-left: 13px;
  background-color: #f0f0f0;
  border-top: 2px solid #dcdcdc;
}

.player {
  width: 170px;
  margin-top: -2px;
  display: flex;
  align-items: center;
  gap: 15.300px;
}

.history {
  position: relative;
  width: 122px;
  height: 42px;
}

.history-icons {
  display: flex;
  gap: 10px;
  padding-top: 4px;
}

.history-bracket {
  margin: 7px 0 0 10px;
}

.history-marker {
  position: absolute;
  left: 106px;
  top: 0;
}

.timeline-gear {
  margin-left: auto;
  margin-right: 18px;
}

/* Taskbar */
.taskbar {
  height: 60px;
  display: flex;
  align-items: center;
  padding-left: 28px;
  background-color: #1c1c1c;
  border-top: 1px solid #333;
}

.start {
  margin-left: 437px;
}

.search {
  width: 275px;
  height: 40px;
  margin-left: 17px;
  display: flex;
  align-items: center;
  padding: 0 14px;
  background-color: #3b3b3b;
  border: 1px solid #4a4a4a;
  border-radius: 20px;
}

.search-text {
  margin-left: 13px;
  font-family: "Noto Sans", sans-serif;
  font-size: 16px;
  color: #ccc;
}

.search-art {
  margin-left: auto;
}

.task-icons {
  margin-left: 3px;
  display: flex;
}

.task {
  position: relative;
  width: 55px;
  height: 50px;
  display: flex;
  align-items: center;
  justify-content: center;
}

.task.active {
  background-color: #2d2d2d;
  border-radius: 5px;
}

.task.active::after {
  content: "";
  position: absolute;
  left: 15px;
  bottom: 1px;
  width: 18px;
  height: 4px;
  border-radius: 2px;
  background-color: #4fc3f7;
}

.task.pinned::after {
  content: "";
  position: absolute;
  left: 25px;
  bottom: 1px;
  width: 5px;
  height: 5px;
  border-radius: 50%;
  background-color: #9a9a9a;
}

.teams-t {
  font: bold 13px "Liberation Sans", sans-serif;
  fill: #5059c9;
  text-anchor: middle;
}

.badge-num {
  font: 11px "Liberation Sans", sans-serif;
  fill: #10233a;
  text-anchor: middle;
}

.myhp {
  font: italic 10px "Liberation Sans", sans-serif;
  fill: #fff;
  text-anchor: middle;
}

.pre {
  font: bold 8px "Liberation Sans", sans-serif;
  fill: #222;
  text-anchor: middle;
}

.tray {
  margin-left: auto;
  padding-right: 24px;
  display: flex;
  align-items: center;
  color: #f2f2f2;
  font-family: "Noto Sans", sans-serif;
  font-size: 15px;
}

.tray-cloud {
  margin-left: 19px;
}

.lang {
  width: 32px;
  margin-left: 19px;
  display: flex;
  flex-direction: column;
  align-items: center;
  line-height: 20px;
}

.tray-wifi {
  margin-left: 21px;
}

.tray-icon {
  margin-left: 10px;
}

.clock {
  margin-left: 21px;
  display: flex;
  flex-direction: column;
  align-items: flex-end;
  line-height: 20px;
}

.tray-bell {
  margin-left: 10px;
}

.tray-copilot {
  margin-left: 22px;
}
```
